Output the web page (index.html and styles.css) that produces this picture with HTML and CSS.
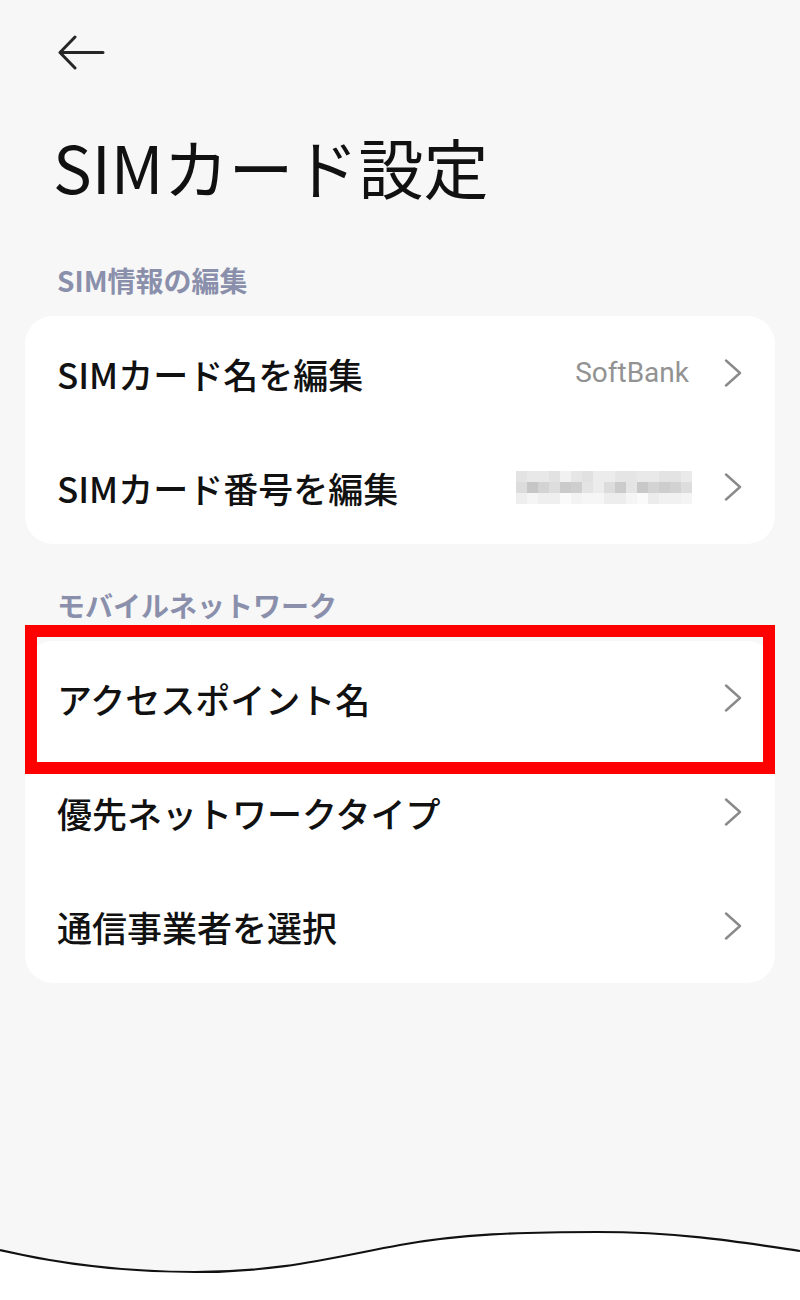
FILE: index.html
```html
<!DOCTYPE html>
<html lang="ja">
<head>
<meta charset="utf-8">
<title>SIMカード設定</title>
<link rel="stylesheet" href="styles.css">
</head>
<body>
<div class="screen">
  <div class="back">
    <svg width="48" height="36" viewBox="0 0 48 36" aria-hidden="true">
      <path d="M46 17.5 H3 M18 2 L3 17.5 L18 33" fill="none" stroke="#262626" stroke-width="3" stroke-linecap="round" stroke-linejoin="round"/>
    </svg>
  </div>
  <h1 class="title">SIMカード設定</h1>

  <div class="section-label">SIM情報の編集</div>
  <div class="card">
    <div class="row">
      <span class="label">SIMカード名を編集</span>
      <span class="value">SoftBank</span>
      <svg class="chev" width="18" height="28" viewBox="0 0 18 28" aria-hidden="true"><polyline points="2,1.5 16,14 2,26.5" fill="none" stroke="#8a8a8a" stroke-width="2.4" stroke-linecap="round" stroke-linejoin="round"/></svg>
    </div>
    <div class="row">
      <span class="label">SIMカード番号を編集</span>
      <span class="blur" aria-hidden="true"></span>
      <svg class="chev" width="18" height="28" viewBox="0 0 18 28" aria-hidden="true"><polyline points="2,1.5 16,14 2,26.5" fill="none" stroke="#8a8a8a" stroke-width="2.4" stroke-linecap="round" stroke-linejoin="round"/></svg>
    </div>
  </div>

  <div class="section-label second">モバイルネットワーク</div>
  <div class="card">
    <div class="row marked">
      <span class="label">アクセスポイント名</span>
      <svg class="chev" width="18" height="28" viewBox="0 0 18 28" aria-hidden="true"><polyline points="2,1.5 16,14 2,26.5" fill="none" stroke="#8a8a8a" stroke-width="2.4" stroke-linecap="round" stroke-linejoin="round"/></svg>
      <span class="highlight"></span>
    </div>
    <div class="row">
      <span class="label">優先ネットワークタイプ</span>
      <svg class="chev" width="18" height="28" viewBox="0 0 18 28" aria-hidden="true"><polyline points="2,1.5 16,14 2,26.5" fill="none" stroke="#8a8a8a" stroke-width="2.4" stroke-linecap="round" stroke-linejoin="round"/></svg>
    </div>
    <div class="row">
      <span class="label">通信事業者を選択</span>
      <svg class="chev" width="18" height="28" viewBox="0 0 18 28" aria-hidden="true"><polyline points="2,1.5 16,14 2,26.5" fill="none" stroke="#8a8a8a" stroke-width="2.4" stroke-linecap="round" stroke-linejoin="round"/></svg>
    </div>
  </div>

  <svg class="wave" width="800" height="80" viewBox="0 0 800 80" aria-hidden="true">
    <path d="M0,30 C60,44 120,52 195,52 C280,52 330,38 400,25 C460,14 520,12 597,12 C680,12 740,22 800,31 L800,80 L0,80 Z" fill="#ffffff"/>
    <path d="M0,30 C60,44 120,52 195,52 C280,52 330,38 400,25 C460,14 520,12 597,12 C680,12 740,22 800,31" fill="none" stroke="#111111" stroke-width="2.2"/>
  </svg>
</div>
</body>
</html>
```

FILE: styles.css
```css
* { box-sizing: border-box; }

html, body {
  margin: 0;
  padding: 0;
  background: #f7f7f7;
}

body {
  font-family: "Noto Sans CJK JP", "Noto Sans", sans-serif;
  color: #111111;
}

.screen {
  width: 800px;
  height: 1300px;
  overflow: hidden;
  display: flex;
  flex-direction: column;
}

.back {
  margin: 35px 0 0 57px;
  height: 36px;
}

.back svg { display: block; }

.title {
  margin: 63px 0 0 53px;
  font-size: 65px;
  line-height: 65px;
  font-weight: 400;
  letter-spacing: 0;
}

.section-label {
  margin: 67px 0 0 57px;
  font-size: 28px;
  line-height: 28px;
  font-weight: 700;
  color: #8a8fab;
}

.section-label.second {
  margin-top: 47px;
}

.card {
  margin: 22px 25px 0 25px;
  background: #ffffff;
  border-radius: 28px;
  display: flex;
  flex-direction: column;
}

.row {
  height: 114px;
  display: flex;
  align-items: center;
  padding: 0 33px 0 32px;
  position: relative;
}

.label {
  flex: 1;
  font-size: 35px;
  line-height: 35px;
  font-weight: 500;
  color: #111111;
  white-space: nowrap;
}

.value {
  font-family: Roboto, "Noto Sans", sans-serif;
  font-size: 28px;
  line-height: 28px;
  color: #929292;
  margin-right: 35px;
}

.chev {
  display: block;
  flex: none;
}

.blur {
  width: 176px;
  height: 33px;
  margin-right: 32px;
  background:
    linear-gradient(90deg, #e3e3e3 0 11px, #e8e8e8 11px 33px, #e2e2e2 33px 44px, #f1f1f1 44px 55px, #e6e6e6 55px 66px, #e1e1e1 66px 77px, #ececec 77px 99px, #e5e5e5 99px 121px, #e9e9e9 121px 143px, #e3e3e3 143px 165px, #eaeaea 165px 176px) top / 100% 11px no-repeat,
    linear-gradient(90deg, #dcdcdc 0 11px, #c6c6c6 11px 22px, #d3d3d3 22px 33px, #dddddd 33px 44px, #cacaca 44px 55px, #cecece 55px 66px, #e4e4e4 66px 77px, #ececec 77px 88px, #dcdcdc 88px 99px, #cbcbcb 99px 110px, #e4e4e4 110px 121px, #c8c8c8 121px 132px, #d3d3d3 132px 143px, #cdcdcd 143px 154px, #d2d2d2 154px 165px, #dddddd 165px 176px) center / 100% 11px no-repeat,
    linear-gradient(90deg, #eeeeee 0 11px, #f5f5f5 11px 22px, #efefef 22px 44px, #fafafa 44px 55px, #f3f3f3 55px 66px, #f6f6f6 66px 88px, #ededed 88px 110px, #f5f5f5 110px 121px, #fafafa 121px 132px, #ececec 132px 143px, #f1f1f1 143px 165px, #f4f4f4 165px 176px) bottom / 100% 11px no-repeat;
}

.highlight {
  position: absolute;
  left: 0;
  right: 0;
  top: -16px;
  bottom: -19px;
  border: 12px solid #ff0000;
  pointer-events: none;
}

.wave {
  display: block;
  margin-top: auto;
  flex: none;
}
```
